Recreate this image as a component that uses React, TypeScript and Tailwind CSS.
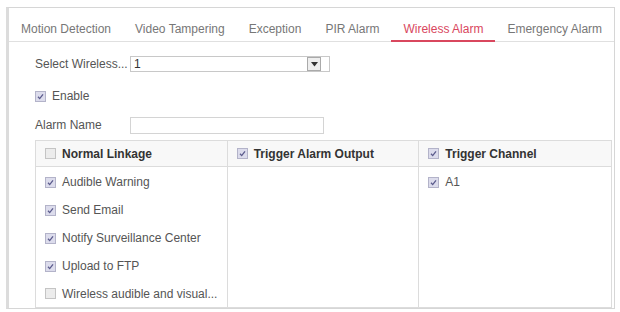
import React from 'react';

const tabs = ['Motion Detection', 'Video Tampering', 'Exception', 'PIR Alarm', 'Wireless Alarm', 'Emergency Alarm'];

function Check({ checked }: { checked: boolean }) {
  return (
    <span
      className={
        'inline-flex h-[11px] w-[11px] shrink-0 items-center justify-center border ' +
        (checked ? 'border-[#b3b3c9] bg-[#dcdcec]' : 'border-[#c4c4c4] bg-[#ececec]')
      }
    >
      {checked && (
        <svg width="9" height="9" viewBox="0 0 9 9">
          <path d="M2 4.8 L3.7 6.6 L7 2.4" fill="none" stroke="#5b5b8c" strokeWidth="1.3" />
        </svg>
      )}
    </span>
  );
}

const linkage = [
  { label: 'Audible Warning', checked: true },
  { label: 'Send Email', checked: true },
  { label: 'Notify Surveillance Center', checked: true },
  { label: 'Upload to FTP', checked: true },
  { label: 'Wireless audible and visual...', checked: false },
];

export default function App() {
  return (
    <div className="h-[312px] w-[620px] overflow-hidden bg-white pt-[7px] pl-[6px] text-[12px] text-[#555] [font-family:'Liberation_Sans',Arial,sans-serif]">
      <div className="h-[302px] w-[609px] overflow-hidden border border-[#d6d6d6] border-l-[3px] border-l-[#dcdcdc]">
        {/* tabs */}
        <div className="flex h-[34px] items-end border-b border-[#e0e0e0]">
          {tabs.map((t) => {
            const active = t === 'Wireless Alarm';
            return (
              <div
                key={t}
                className={
                  'whitespace-nowrap px-3 leading-[14px] ' +
                  (active ? 'mb-[-1px] border-b-2 border-[#d9475e] pb-[4px] text-[#d9475e]' : 'pb-[5px] text-[#777]')
                }
              >
                {t}
              </div>
            );
          })}
        </div>

        <div className="pl-[26px] pr-[2px]">
          <div className="mt-[13px] flex items-center">
            <span className="w-[95px] whitespace-nowrap">Select Wireless...</span>
            <div className="flex h-[16px] w-[200px] items-center justify-between border border-[#c8c8c8] pl-[3px]">
              <span className="text-[#333]">1</span>
              <span className="mr-[8px] flex h-[14px] w-[14px] items-center justify-center border border-[#aaa] bg-[#eee]">
                <svg width="7" height="5" viewBox="0 0 7 5">
                  <path d="M0 0 H7 L3.5 4.5 Z" fill="#333" />
                </svg>
              </span>
            </div>
          </div>

          <div className="mt-[14px] flex items-center gap-[6px]">
            <Check checked />
            <span>Enable</span>
          </div>

          <div className="mt-[11px] flex items-center">
            <span className="w-[95px]">Alarm Name</span>
            <div className="h-[17px] w-[194px] border border-[#d4d4d4]" />
          </div>

          <div className="mt-[6px] grid w-[577px] grid-cols-3 border border-[#dcdcdc]">
            <div className="flex h-[26px] items-center gap-[6px] border-b border-r border-[#dcdcdc] bg-[#f8f8f8] pl-[9px] font-bold text-[#333]">
              <Check checked={false} />
              <span>Normal Linkage</span>
            </div>
            <div className="flex h-[26px] items-center gap-[6px] border-b border-r border-[#dcdcdc] bg-[#f8f8f8] pl-[9px] font-bold text-[#333]">
              <Check checked />
              <span>Trigger Alarm Output</span>
            </div>
            <div className="flex h-[26px] items-center gap-[6px] border-b border-[#dcdcdc] bg-[#f8f8f8] pl-[9px] font-bold text-[#333]">
              <Check checked />
              <span>Trigger Channel</span>
            </div>

            <div className="h-[140px] border-r border-[#dcdcdc] pl-[9px] pt-[7px]">
              {linkage.map((l) => (
                <div key={l.label} className="flex h-[28px] items-start gap-[6px] pt-[1px] leading-[14px]">
                  <span className="mt-[1px]">
                    <Check checked={l.checked} />
                  </span>
                  <span className="whitespace-nowrap">{l.label}</span>
                </div>
              ))}
            </div>
            <div className="border-r border-[#dcdcdc]" />
            <div className="pl-[9px] pt-[7px]">
              <div className="flex h-[28px] items-start gap-[6px] pt-[1px] leading-[14px]">
                <span className="mt-[1px]">
                  <Check checked />
                </span>
                <span>A1</span>
              </div>
            </div>
          </div>
        </div>
      </div>
    </div>
  );
}
